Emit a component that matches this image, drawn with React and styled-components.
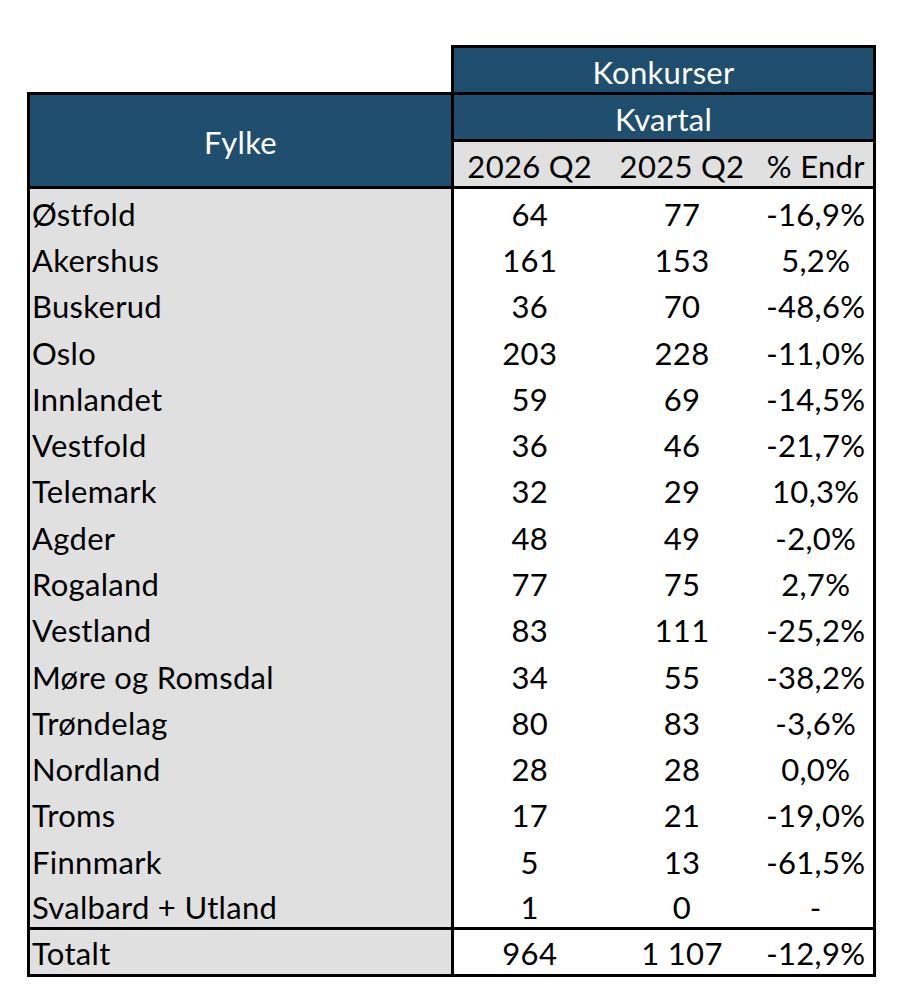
import styled, { createGlobalStyle } from "styled-components";

const GlobalStyle = createGlobalStyle`
  body {
    margin: 0;
    background: #ffffff;
    font-family: Lato, "Open Sans", sans-serif;
  }
`;

const Page = styled.div`
  padding: 45px 0 0 27px;
`;

const Table = styled.table`
  border-collapse: collapse;
  table-layout: fixed;
  width: 846px;
  font-size: 31px;
  letter-spacing: 0.3px;
  line-height: 1.2;
  color: #000;
`;

const HeadCell = styled.th`
  height: 43px;
  padding: 0 0 1px;
  font-weight: 400;
  text-align: center;
  vertical-align: bottom;
  color: #fff;
  background: #1f4e6e;
  border: 3px solid #000;
`;

const Blank = styled.th`
  padding: 0;
  border: none;
  background: #fff;
`;

const SubCell = styled.th`
  height: 43px;
  padding: 0 0 1px;
  font-weight: 400;
  text-align: center;
  vertical-align: bottom;
  background: #e0e0e0;
  border-top: 3px solid #000;
  border-bottom: 3px solid #000;
  ${(p) => p.last && "border-right: 3px solid #000;"}
`;

const FylkeHead = styled.th`
  padding: 4px 0 0;
  font-weight: 400;
  text-align: center;
  vertical-align: middle;
  color: #fff;
  background: #1f4e6e;
  border: 3px solid #000;
`;

const NameCell = styled.td`
  height: ${(p) => (p.total ? 47 : 46.3)}px;
  padding: 0 0 ${(p) => (p.total ? 2 : 1)}px 2px;
  text-align: left;
  vertical-align: bottom;
  white-space: nowrap;
  background: #e0e0e0;
  border-left: 3px solid #000;
  border-right: 3px solid #000;
  box-sizing: border-box;
  ${(p) => p.total && "border-top: 3px solid #000; border-bottom: 3px solid #000;"}
`;

const NumCell = styled.td`
  padding: 0 0 ${(p) => (p.total ? 2 : 1)}px;
  text-align: center;
  vertical-align: bottom;
  background: #fff;
  white-space: nowrap;
  ${(p) => p.last && "border-right: 3px solid #000;"}
  ${(p) => p.total && "border-top: 3px solid #000; border-bottom: 3px solid #000;"}
`;

const rows = [
  ["Østfold", "64", "77", "-16,9%"],
  ["Akershus", "161", "153", "5,2%"],
  ["Buskerud", "36", "70", "-48,6%"],
  ["Oslo", "203", "228", "-11,0%"],
  ["Innlandet", "59", "69", "-14,5%"],
  ["Vestfold", "36", "46", "-21,7%"],
  ["Telemark", "32", "29", "10,3%"],
  ["Agder", "48", "49", "-2,0%"],
  ["Rogaland", "77", "75", "2,7%"],
  ["Vestland", "83", "111", "-25,2%"],
  ["Møre og Romsdal", "34", "55", "-38,2%"],
  ["Trøndelag", "80", "83", "-3,6%"],
  ["Nordland", "28", "28", "0,0%"],
  ["Troms", "17", "21", "-19,0%"],
  ["Finnmark", "5", "13", "-61,5%"],
  ["Svalbard + Utland", "1", "0", "-"],
];

const total = ["Totalt", "964", "1 107", "-12,9%"];

const DataRow = ({ cells, total }) => (
  <tr>
    <NameCell total={total}>{cells[0]}</NameCell>
    <NumCell total={total}>{cells[1]}</NumCell>
    <NumCell total={total}>{cells[2]}</NumCell>
    <NumCell total={total} last>
      {cells[3]}
    </NumCell>
  </tr>
);

export default function App() {
  return (
    <Page>
      <GlobalStyle />
      <Table>
        <colgroup>
          <col style={{ width: 424 }} />
          <col style={{ width: 153 }} />
          <col style={{ width: 153 }} />
          <col style={{ width: 116 }} />
        </colgroup>
        <thead>
          <tr>
            <Blank />
            <HeadCell colSpan={3}>Konkurser</HeadCell>
          </tr>
          <tr>
            <FylkeHead rowSpan={2}>Fylke</FylkeHead>
            <HeadCell colSpan={3}>Kvartal</HeadCell>
          </tr>
          <tr>
            <SubCell>2026 Q2</SubCell>
            <SubCell>2025 Q2</SubCell>
            <SubCell last>% Endr</SubCell>
          </tr>
        </thead>
        <tbody>
          {rows.map((r) => (
            <DataRow key={r[0]} cells={r} />
          ))}
          <DataRow cells={total} total />
        </tbody>
      </Table>
    </Page>
  );
}
